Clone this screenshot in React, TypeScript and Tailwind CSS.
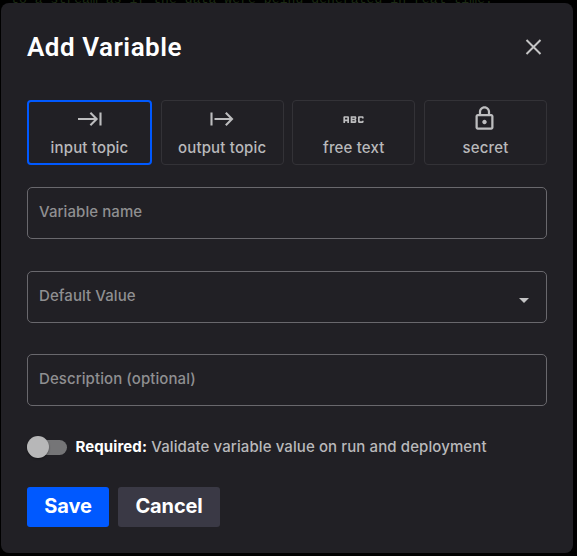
import { useState } from "react";

const inter = "font-['Inter','Liberation_Sans',sans-serif]";

function InputIcon() {
  return (
    <svg width="24" height="24" viewBox="0 0 24 24" fill="none" stroke="#bdbdbf" strokeWidth="2.1">
      <path d="M0 12H18.6M12.400 5.800L18.600 12L12.400 18.200M22.500 5.500V18.500" />
    </svg>
  );
}

function OutputIcon() {
  return (
    <svg width="24" height="24" viewBox="0 0 24 24" fill="none" stroke="#bdbdbf" strokeWidth="2.1">
      <path d="M1.500 5.500V18.500M4.500 12H22M15.800 5.800L22 12L15.800 18.200" />
    </svg>
  );
}

function AbcIcon() {
  return (
    <svg width="27" height="27" viewBox="0 0 24 24" fill="#bdbdbf">
      <path d="M21 11h-1.500v-.5h-2v3h2V13H21v1c0 .55-.45 1-1 1h-3c-.55 0-1-.45-1-1v-4c0-.55.45-1 1-1h3c.55 0 1 .45 1 1v1zM8 10v5H6.500v-1.500h-2V15H3v-5c0-.55.45-1 1-1h3c.55 0 1 .45 1 1zm-1.500.5h-2V12h2v-1.500zm7 1.500c.55 0 1 .45 1 1v1c0 .55-.45 1-1 1h-4V9h4c.55 0 1 .45 1 1v1c0 .55-.45 1-1 1zM11 10.500v.75h2v-.75h-2zm2 2.250h-2v.75h2v-.75z" />
    </svg>
  );
}

function LockIcon() {
  return (
    <svg className="relative -top-px -left-[0.5px]" width="27" height="27" viewBox="0 0 24 24" fill="#bdbdbf">
      <path d="M18 8h-1V6c0-2.760-2.240-5-5-5S7 3.240 7 6v2H6c-1.100 0-2 .9-2 2v10c0 1.100.9 2 2 2h12c1.100 0 2-.9 2-2V10c0-1.100-.9-2-2-2zM9 6c0-1.660 1.340-3 3-3s3 1.340 3 3v2H9V6zm9 14H6V10h12v10zm-6-3c1.100 0 2-.9 2-2s-.9-2-2-2-2 .9-2 2 .9 2 2 2z" />
    </svg>
  );
}

const types = [
  { label: "input topic", icon: <InputIcon /> },
  { label: "output topic", icon: <OutputIcon /> },
  { label: "free text", icon: <AbcIcon /> },
  { label: "secret", icon: <LockIcon /> },
];

function Field({ label, className, children }: { label: string; className: string; children?: React.ReactNode }) {
  return (
    <div className={`flex h-[52px] justify-between rounded-[5px] border border-[#69686d] px-[11px] ${className}`}>
      <span className="pt-[12px] text-[15px] leading-6 font-[450] tracking-[0.08px] text-[#8f8f91]">{label}</span>
      {children}
    </div>
  );
}

export default function App() {
  const [selected, setSelected] = useState(0);
  return (
    <div className="relative h-[556px] w-[577px] overflow-hidden bg-black pt-[3px] pl-px">
      <div className="absolute top-[-8px] left-[11px] font-['Liberation_Mono',monospace] text-[13px] leading-4 tracking-[0.1px] whitespace-pre text-[#1c2a14]">
        to a stream as if the data were being generated in real-time.
      </div>
      <div className={`relative h-[550px] w-[572px] rounded-lg bg-[#212025] px-[26px] ${inter}`}>
        <header className="flex h-[97px] items-start justify-between pt-[28px]">
          <h2 className="font-['Roboto',sans-serif] text-[26px] leading-8 font-semibold tracking-[0.52px] whitespace-nowrap text-white">Add Variable</h2>
          <button aria-label="Close" className="mt-[4px] mr-[2px]">
            <svg width="24" height="24" viewBox="0 0 24 24" fill="none" stroke="#c4c4c5" strokeWidth="2">
              <path d="M5.500 5L19.500 19M19.500 5L5.500 19" />
            </svg>
          </button>
        </header>

        <div className="flex justify-between">
          {types.map((t, i) => (
            <button
              key={t.label}
              onClick={() => setSelected(i)}
              className={`flex h-[65px] flex-col items-center justify-end rounded-[4px] ${
                i === selected ? "w-[125px] border-2 border-[#0059ff] pb-px" : "w-[123px] border border-[#333237] pb-[2px]"
              }`}
            >
              <span className="flex h-7 items-center">{t.icon}</span>
              <span className="mt-[1px] text-[15px] leading-7 font-[450] tracking-[0.17px] text-[#b9b9bb]">{t.label}</span>
            </button>
          ))}
        </div>

        <Field label="Variable name" className="mt-[22px]" />
        <Field label="Default Value" className="mt-[32px]">
          <svg className="mt-[26px] mr-[6.5px]" width="10" height="5" viewBox="0 0 10 5" fill="#c4c4c5">
            <path d="M0 0H10L5 5Z" />
          </svg>
        </Field>
        <Field label="Description (optional)" className="mt-[31px]" />

        <div className="mt-[30px] flex h-[22px] items-center">
          <div className="flex h-[15px] w-10 items-center rounded-full bg-[#757577]">
            <div className="size-[22px] shrink-0 rounded-full bg-[#b7b7b8] shadow-[0_1px_2px_rgba(0,0,0,0.4)]" />
          </div>
          <p className="ml-[8.5px] text-[15px] whitespace-nowrap text-[#b9b9bb]">
            <span className="font-bold tracking-[0.1px] text-white">Required:</span>{" "}
            <span className="font-[450] tracking-[0.1px]">Validate variable value on run and deployment</span>
          </p>
        </div>

        <div className="mt-[29px] flex gap-[9px] text-[20px] font-bold tracking-[-0.15px] text-white">
          <button className="h-10 w-[82px] rounded-[3px] bg-[#0059ff] pb-[2px]">Save</button>
          <button className="h-10 w-[102px] rounded-[3px] bg-[#3a3945] pb-[2px]">Cancel</button>
        </div>
      </div>
    </div>
  );
}
